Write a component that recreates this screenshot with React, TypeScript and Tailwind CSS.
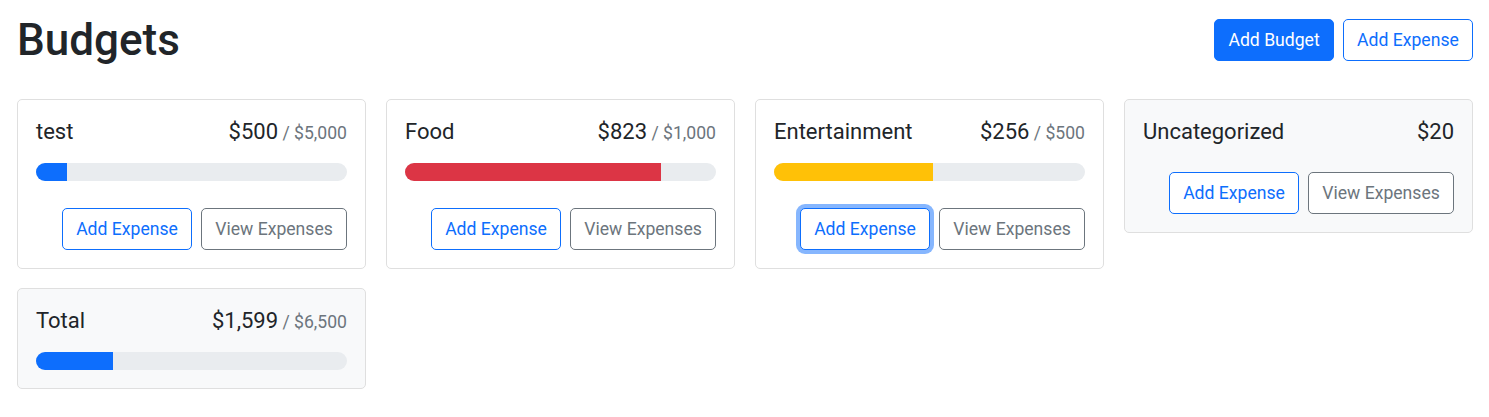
type Budget = {
	name: string;
	amount: number;
	max?: number;
	light?: boolean;
	buttons?: boolean;
	focused?: boolean;
};

const budgets: Budget[] = [
	{ name: "test", amount: 500, max: 5000, buttons: true },
	{ name: "Food", amount: 823, max: 1000, buttons: true },
	{ name: "Entertainment", amount: 256, max: 500, buttons: true, focused: true },
	{ name: "Uncategorized", amount: 20, light: true, buttons: true },
	{ name: "Total", amount: 1599, max: 6500, light: true },
];

const money = (n: number) => `$${n.toLocaleString("en-US")}`;

function barColor(amount: number, max: number) {
	const ratio = amount / max;
	if (ratio < 0.5) return "bg-[#0d6efd]";
	if (ratio < 0.75) return "bg-[#ffc107]";
	return "bg-[#dc3545]";
}

function BudgetCard({ budget }: { budget: Budget }) {
	const { name, amount, max, light, buttons, focused } = budget;
	return (
		<div
			className={`border border-[#dfdfdf] rounded-[5px] p-[18px] ${light ? "bg-[#f8f9fa]" : "bg-white"}`}
		>
			<div className="flex justify-between items-baseline h-[27px] leading-[27px]">
				<div className="text-[22px] mr-2">{name}</div>
				<div className="flex items-baseline">
					<span className="text-[22px]">{money(amount)}</span>
					{max && (
						<span className="text-[17.6px] text-[#6c757d] ml-[4.4px]">
							/ {money(max)}
						</span>
					)}
				</div>
			</div>
			{max && (
				<div className="mt-[18px] h-[18px] rounded-full bg-[#e9ecef] overflow-hidden flex">
					<div
						className={`h-full ${barColor(amount, max)}`}
						style={{ width: `${(amount / max) * 100}%` }}
					/>
				</div>
			)}
			{buttons && (
				<div className="mt-[27px] flex justify-end gap-[9px]">
					<button
						type="button"
						className={`h-[42px] px-[13.2px] text-[17.6px] border border-[#0d6efd] text-[#0d6efd] rounded-[5px] bg-white ${focused ? "shadow-[0_0_0_4px_rgba(13,110,253,0.5)]" : ""}`}
					>
						Add Expense
					</button>
					<button
						type="button"
						className="h-[42px] px-[13.2px] text-[17.6px] border border-[#6c757d] text-[#6c757d] rounded-[5px] bg-white"
					>
						View Expenses
					</button>
				</div>
			)}
		</div>
	);
}

export default function App() {
	return (
		<div
			className="min-h-[417px] bg-white text-[#212529] pl-[17px] pr-4 pt-[14px]"
			style={{ fontFamily: "Roboto, 'Liberation Sans', sans-serif" }}
		>
			<div className="flex items-center">
				<h1 className="text-[44px] leading-[1.2] font-medium mr-auto">Budgets</h1>
				<div className="flex gap-[9px]">
					<button
						type="button"
						className="h-[42px] px-[13.2px] text-[17.6px] border border-[#0d6efd] bg-[#0d6efd] text-white rounded-[5px]"
					>
						Add Budget
					</button>
					<button
						type="button"
						className="h-[42px] px-[13.2px] text-[17.6px] border border-[#0d6efd] text-[#0d6efd] bg-white rounded-[5px]"
					>
						Add Expense
					</button>
				</div>
			</div>

			<div className="mt-[32px] grid grid-cols-4 gap-x-5 gap-y-[19px] items-start">
				{budgets.map((b) => (
					<BudgetCard key={b.name} budget={b} />
				))}
			</div>
		</div>
	);
}
